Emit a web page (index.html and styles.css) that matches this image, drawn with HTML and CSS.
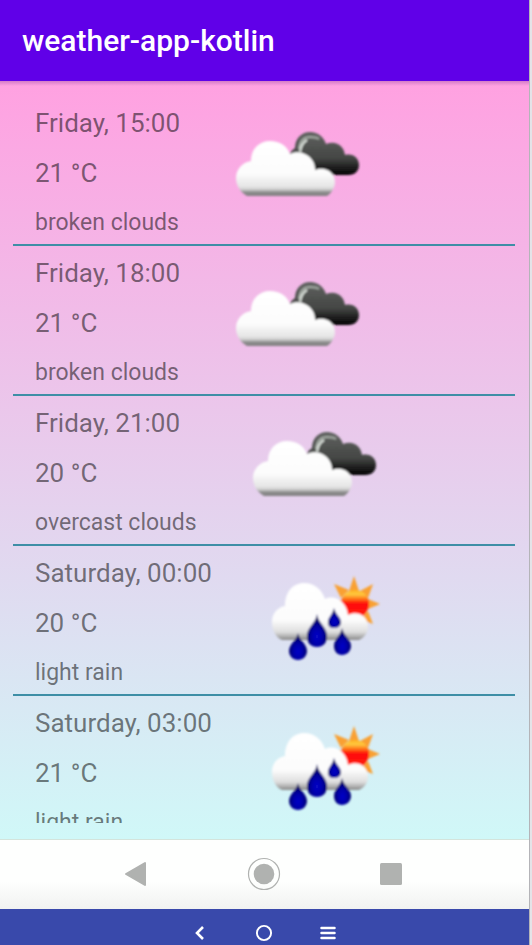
FILE: index.html
```html
<!DOCTYPE html>
<html lang="en">
<head>
<meta charset="utf-8">
<meta name="viewport" content="width=device-width, initial-scale=1">
<title>weather-app-kotlin</title>
<link rel="stylesheet" href="styles.css">
</head>
<body>
<svg class="defs" width="0" height="0" aria-hidden="true">
  <defs>
    <linearGradient id="white" gradientUnits="userSpaceOnUse" x1="0" y1="45" x2="0" y2="101">
      <stop offset="0" stop-color="#fff"/><stop offset=".6" stop-color="#fcfcfc"/><stop offset=".84" stop-color="#e4e4e4"/><stop offset=".89" stop-color="#c8c8c8"/><stop offset=".93" stop-color="#8c8c8c"/><stop offset="1" stop-color="#808080"/>
    </linearGradient>
    <linearGradient id="rainwhite" gradientUnits="userSpaceOnUse" x1="0" y1="38" x2="0" y2="95">
      <stop offset="0" stop-color="#fff"/><stop offset=".65" stop-color="#fcfcfc"/><stop offset=".86" stop-color="#dedede"/><stop offset="1" stop-color="#8a8a8a"/>
    </linearGradient>
    <linearGradient id="dark" gradientUnits="userSpaceOnUse" x1="0" y1="38" x2="0" y2="80">
      <stop offset="0" stop-color="#606260"/><stop offset=".6" stop-color="#444644"/><stop offset="1" stop-color="#000"/>
    </linearGradient>
    <linearGradient id="sun" x1="0" y1="0" x2="0" y2="1">
      <stop offset="0" stop-color="#ffae20"/><stop offset=".15" stop-color="#ffcc40"/><stop offset=".34" stop-color="#ff6a18"/><stop offset=".48" stop-color="#ff0c08"/><stop offset="1" stop-color="#ff1c10"/>
    </linearGradient>
    <radialGradient id="drop" cx=".5" cy=".68" r=".55">
      <stop offset="0" stop-color="#0808c8"/><stop offset=".5" stop-color="#0000a8"/><stop offset="1" stop-color="#000058"/>
    </radialGradient>
    <filter id="soft" x="-5%" y="-5%" width="110%" height="110%"><feGaussianBlur stdDeviation=".9"/></filter>
    <symbol id="clouds" viewBox="0 1 150 148">
      <g filter="url(#soft)">
        <path fill="url(#dark)" d="M66 60C68 56 70 54 72 53C72 43 79 37 87 37C95 37 101 42 103 49C113 45 121 51 122 60C130 58 136 63 136 70C136 76 132 80 125 80H88Z"/>
        <path d="M76 54C77 46 81 42 87 42C90 42 93 42 96 44" fill="none" stroke="#a4aca4" stroke-width="2"/>
        <path d="M77 57C78 50 80 47 84 45" fill="none" stroke="#dce2dc" stroke-width="2"/>
        <path fill="url(#white)" d="M24 101C17 97 13 90 13 83C13 74 20 67 28 66C28 54 36 46 47 46C57 46 64 51 67 59C80 53 93 64 92 75C102 71 112 77 112 87C112 92 109 98 104 101Z"/>
      </g>
    </symbol>
    <symbol id="rain" viewBox="0 1 150 148">
      <g filter="url(#soft)">
        <path fill="#f9a030" d="M94 46L99 31L104 46ZM105 46L118 39L113 53ZM113 54L125 59L113 64ZM113 66L118 79L105 74ZM94 45L79 39L86 53ZM86 54L78 60L86 66Z"/>
        <circle cx="100" cy="59" r="14" fill="url(#sun)"/>
        <path fill="url(#rainwhite)" d="M27 95C20 92 17 84 17 77C17 68 23 62 30 61C30 47 38 38 49 38C60 38 67 45 70 54C80 49 92 57 93 70C103 65 113 71 113 82C113 88 109 93 104 95Z"/>
        <g fill="url(#drop)">
          <path d="M62 69C63 78 72 82 72 91C72 98 68 102 62 102C56 102 52 98 52 91C52 82 61 78 62 69Z"/>
          <path d="M43 88C44 95 52 99 52 106C52 111 48 115 43 115C38 115 34 111 34 106C34 99 42 95 43 88Z"/>
          <path d="M87 83C88 90 96 94 96 101C96 106 92 110 87 110C82 110 79 106 79 101C79 94 86 90 87 83Z"/>
          <path d="M79 63C80 69 86 72 86 77C86 81 83 83 79 83C75 83 73 81 73 77C73 72 78 69 79 63Z"/>
        </g>
      </g>
    </symbol>
  </defs>
</svg>
<div class="screen">
  <header class="appbar"><h1>weather-app-kotlin</h1></header>
  <main class="content">
    <ul class="forecast">
      <li class="entry">
        <div class="info"><p class="time">Friday, 15:00</p><p class="temp">21 °C</p><p class="desc">broken clouds</p></div>
        <svg class="icon" aria-hidden="true"><use href="#clouds"/></svg>
      </li>
      <li class="entry">
        <div class="info"><p class="time">Friday, 18:00</p><p class="temp">21 °C</p><p class="desc">broken clouds</p></div>
        <svg class="icon" aria-hidden="true"><use href="#clouds"/></svg>
      </li>
      <li class="entry">
        <div class="info"><p class="time">Friday, 21:00</p><p class="temp">20 °C</p><p class="desc">overcast clouds</p></div>
        <svg class="icon" aria-hidden="true"><use href="#clouds"/></svg>
      </li>
      <li class="entry">
        <div class="info"><p class="time">Saturday, 00:00</p><p class="temp">20 °C</p><p class="desc">light rain</p></div>
        <svg class="icon" aria-hidden="true"><use href="#rain"/></svg>
      </li>
      <li class="entry">
        <div class="info"><p class="time">Saturday, 03:00</p><p class="temp">21 °C</p><p class="desc">light rain</p></div>
        <svg class="icon" aria-hidden="true"><use href="#rain"/></svg>
      </li>
    </ul>
  </main>
  <nav class="keys">
    <button type="button" aria-label="Back"><svg width="34" height="34" viewBox="0 0 34 34"><path d="M7 17L26 6V28Z" fill="#b0b2b0" stroke="#b0b2b0" stroke-width="2" stroke-linejoin="round"/></svg></button>
    <button type="button" aria-label="Home"><svg width="34" height="34" viewBox="0 0 34 34"><circle cx="17" cy="17" r="15.5" fill="none" stroke="#b0b2b0" stroke-width="1.2"/><circle cx="17" cy="17" r="10.3" fill="#b0b2b0"/></svg></button>
    <button type="button" aria-label="Overview"><svg width="34" height="34" viewBox="0 0 34 34"><rect x="5" y="6" width="22" height="22" rx="1.5" fill="#b0b2b0"/></svg></button>
  </nav>
  <nav class="device">
    <button type="button" aria-label="Device back"><svg width="20" height="20" viewBox="0 0 20 20"><path d="M13 4L7 10L13 16" fill="none" stroke="#fff" stroke-width="2.6"/></svg></button>
    <button type="button" aria-label="Device home"><svg width="20" height="20" viewBox="0 0 20 20"><circle cx="10" cy="10" r="7.1" fill="none" stroke="#fff" stroke-width="1.9"/></svg></button>
    <button type="button" aria-label="Device menu"><svg width="20" height="20" viewBox="0 0 20 20"><path d="M3.5 5H16.5M3.5 10H16.5M3.5 15H16.5" stroke="#fff" stroke-width="2.5" stroke-linecap="round"/></svg></button>
  </nav>
</div>
</body>
</html>
```
FILE: styles.css
```css
* { box-sizing: border-box; margin: 0; padding: 0; }

body {
  background: #e4e4e8;
  font-family: Roboto, sans-serif;
}

.defs { position: absolute; }

.screen {
  display: flex;
  flex-direction: column;
  height: 100vh;
  margin-right: 2px;
  border-right: 1px solid #b4b4b8;
  overflow: hidden;
}

.appbar {
  display: flex;
  align-items: center;
  flex: none;
  height: 81px;
  padding-left: 22px;
  background: #6000e8;
  color: #fff;
}

.appbar h1 {
  font-size: 30px;
  font-weight: 500;
  line-height: 36px;
}

.content {
  flex: 1;
  min-height: 0;
  padding: 15px 14px 16px 13px;
  background:
    linear-gradient(rgba(80, 20, 120, .25), transparent 5px),
    linear-gradient(#ffa1e1, #d0f8f8);
}

.forecast {
  height: 100%;
  overflow: hidden;
  list-style: none;
}

.entry {
  display: flex;
  gap: 43px;
  height: 150px;
  padding-left: 22px;
  border-bottom: 2px solid #3e8ea6;
  color: rgba(0, 0, 0, .52);
}

.info { padding-top: 11px; white-space: nowrap; }

.time, .temp {
  margin-bottom: 18px;
  font-size: 26px;
  line-height: 32px;
}

.desc { font-size: 23px; line-height: 32px; }

.icon { flex: none; width: 150px; height: 148px; }

button {
  display: flex;
  justify-content: center;
  align-items: center;
  border: 0;
  background: none;
}

.keys {
  display: flex;
  justify-content: center;
  gap: 68px;
  flex: none;
  height: 70px;
  padding: 0 2px 2px 0;
  border-top: 1px solid #d4e4dc;
  background: linear-gradient(#fefffe 60%, #f1f2f1);
}

.keys button { width: 60px; }

.device {
  display: flex;
  justify-content: center;
  align-items: flex-start;
  gap: 4px;
  flex: none;
  height: 36px;
  padding-right: 2px;
  background: #3949ab;
  overflow: hidden;
}

.device button { width: 60px; height: 48px; }
```
